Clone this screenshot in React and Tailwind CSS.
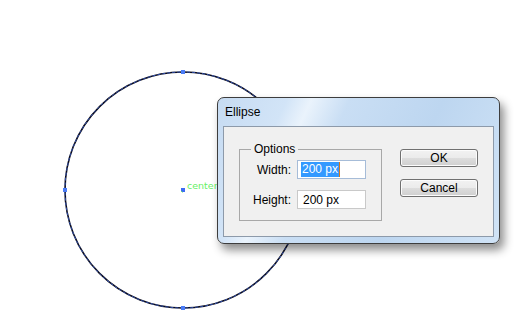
import React from "react";

// --- canvas + "Ellipse" options dialog ---
const FONT = "font-['Liberation_Sans','DejaVu_Sans',sans-serif]";

const Anchor = ({ x, y }) => (
    <rect x={x - 2} y={y - 2} width="4" height="4" fill="#4a7cf7" />
);

const Canvas = () => (
    <svg className="absolute left-0 top-0" width="529" height="330" viewBox="0 0 529 330">
        <circle cx="183" cy="190" r="118" fill="none" stroke="#0b0b1a" strokeWidth="1.6" />
        <circle cx="183" cy="190" r="118" fill="none" stroke="#3b63d8" strokeWidth="0.8" strokeDasharray="3 2" />
        <Anchor x={183} y={72} />
        <Anchor x={65} y={190} />
        <Anchor x={183} y={308} />
        <Anchor x={301} y={190} />
        <rect x="181" y="188" width="4" height="4" fill="#3d6cf2" />
        <path d="M181 191 L182.5 192.5" stroke="#6ee36e" strokeWidth="1" />
        <text x="187" y="189" fontSize="9.5" fill="#66f066" fontFamily="DejaVu Sans, sans-serif">center</text>
    </svg>
);

const Button = ({ children }) => (
    <button className="w-[78px] h-[18px] rounded-[3px] border border-[#707070] bg-[linear-gradient(#f2f2f2_0%,#ebebeb_50%,#dddddd_51%,#cfcfcf_100%)] shadow-[inset_0_0_0_1px_#fcfcfc] text-[12px] leading-none text-black">
        {children}
    </button>
);

const Field = ({ label, selected }) => (
    <div className="flex items-center">
        <span className="w-[52px] pr-[6px] text-right text-[12px] text-black">{label}</span>
        <div className={`w-[69px] h-[19px] bg-white border flex items-center pl-[3px] text-[12px] ${selected ? "border-[#a6bcd8]" : "border-[#c9c9c9]"}`}>
            {selected ? (
                <span className="flex items-center">
                    <span className="bg-[#3399ff] text-white px-[1px] leading-[15px]">200 px</span>
                    <span className="w-px h-[15px] bg-[#d4771c]" />
                </span>
            ) : (
                <span className="px-[2px]">200 px</span>
            )}
        </div>
    </div>
);

const Dialog = () => (
    <div className={`absolute left-[217px] top-[97px] w-[283px] h-[147px] rounded-[7px] border border-[#3d3d3d] bg-[linear-gradient(115deg,#c6dbf2_0%,#d2e4f7_20%,#eaf3fc_27%,#c9def4_38%,#bdd6f0_65%,#d0e3f6_100%)] shadow-[4px_6px_10px_rgba(0,0,0,0.45)] flex flex-col px-[5px] pb-[6px] ${FONT}`}>
        <div className="h-[28px] flex items-center pl-[2px] text-[12px] text-black">Ellipse</div>
        <div className="flex-1 bg-[#f0f0f0] border border-[#8d9aaa] flex pl-[15px] pt-[15px]">
            <fieldset className="w-[143px] h-[79px] border border-[#a8a8a8] px-[14px] pt-[4px]">
                <legend className="px-[3px] -ml-[3px] text-[12px] leading-[14px] text-black">Options</legend>
                <div className="flex flex-col gap-[11px] -ml-[14px] pl-[5px]">
                    <Field label="Width:" selected />
                    <Field label="Height:" />
                </div>
            </fieldset>
            <div className="ml-[18px] mt-[7px] flex flex-col gap-[12px]">
                <Button>OK</Button>
                <Button>Cancel</Button>
            </div>
        </div>
    </div>
);

export default function App() {
    return (
        <div className="relative w-[529px] h-[330px] bg-white overflow-hidden">
            <Canvas />
            <Dialog />
        </div>
    );
}
